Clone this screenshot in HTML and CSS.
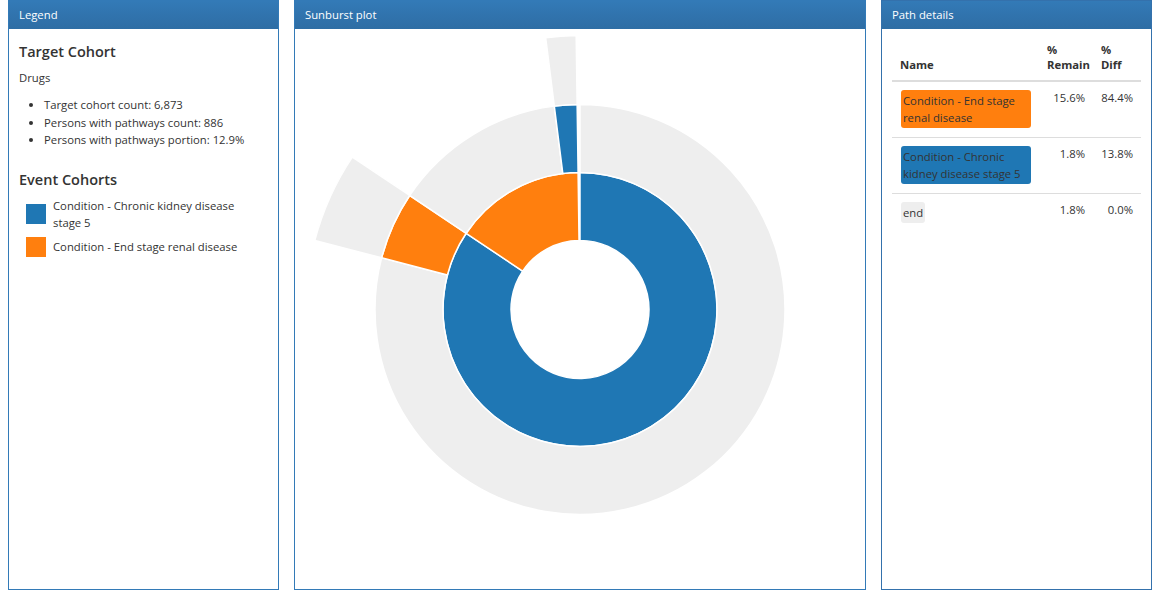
FILE: index.html
```html
<!DOCTYPE html>
<html>
	<head>
		<meta charset="UTF-8">
		<title>Pathways</title>
		<link rel="stylesheet" href="styles.css">
	</head>
	<body>
		<div class="page">
			<div class="panel">
				<div class="panel-heading">Legend</div>
				<div class="panel-body legend">
					<h4>Target Cohort</h4>
					<p>Drugs</p>
					<ul>
						<li>Target cohort count: 6,873</li>
						<li>Persons with pathways count: 886</li>
						<li>Persons with pathways portion: 12.9%</li>
					</ul>
					<h4 class="second">Event Cohorts</h4>
					<div class="legend-item">
						<span class="swatch blue"></span>
						<span class="label">Condition - Chronic kidney disease stage 5</span>
					</div>
					<div class="legend-item">
						<span class="swatch orange"></span>
						<span class="label">Condition - End stage renal disease</span>
					</div>
				</div>
			</div>
			<div class="panel">
				<div class="panel-heading">Sunburst plot</div>
				<div class="panel-body plot">
					<svg id="sunburst" width="570" height="559" viewBox="0 0 570 559"></svg>
				</div>
			</div>
			<div class="panel path">
				<div class="panel-heading">Path details</div>
				<div class="panel-body details">
					<table class="table">
						<colgroup>
							<col class="c-name">
							<col class="c-remain">
							<col class="c-diff">
						</colgroup>
						<thead>
							<tr>
								<th>Name</th>
								<th>%<br>Remain</th>
								<th>%<br>Diff</th>
							</tr>
						</thead>
						<tbody>
							<tr>
								<td><span class="tag orange">Condition - End stage renal disease</span></td>
								<td class="num">15.6%</td>
								<td class="num">84.4%</td>
							</tr>
							<tr>
								<td><span class="tag blue">Condition - Chronic kidney disease stage 5</span></td>
								<td class="num">1.8%</td>
								<td class="num">13.8%</td>
							</tr>
							<tr>
								<td><span class="tag end">end</span></td>
								<td class="num">1.8%</td>
								<td class="num">0.0%</td>
							</tr>
						</tbody>
					</table>
				</div>
			</div>
		</div>
		<script>
			var svg=document.getElementById('sunburst');
			var cx=285, cy=279.5;
			// inner radius, outer radius, start angle, end angle (degrees, clockwise from top), colour
			var segs=[
				[69,137,0,303.8,'#1f77b4'],
				[69,137,303.8,359.2,'#ff7f0e'],
				[137,205,0,284.6,'#eeeeee'],
				[137,205,284.6,303.8,'#ff7f0e'],
				[137,205,303.8,352.8,'#eeeeee'],
				[137,205,352.8,359.2,'#1f77b4'],
				[205,274,284.6,303.8,'#eeeeee'],
				[205,274,352.8,359.2,'#eeeeee']
			];
			function pt(r,a){
				a=a*Math.PI/180;
				return [(cx+r*Math.sin(a)).toFixed(2),(cy-r*Math.cos(a)).toFixed(2)];
			}
			function arc(r0,r1,a0,a1){
				var large=(a1-a0)>180?1:0;
				return 'M'+pt(r1,a0)+'A'+r1+','+r1+' 0 '+large+' 1 '+pt(r1,a1)+
					'L'+pt(r0,a1)+'A'+r0+','+r0+' 0 '+large+' 0 '+pt(r0,a0)+'Z';
			}
			for(var i=0;i<segs.length;i++){
				var s=segs[i];
				var p=document.createElementNS('http://www.w3.org/2000/svg','path');
				p.setAttribute('d',arc(s[0],s[1],s[2],s[3]));
				p.setAttribute('fill',s[4]);
				p.setAttribute('class','seg');
				svg.appendChild(p);
			}
		</script>
	</body>
</html>
```

FILE: styles.css
```css
*{
	box-sizing: border-box;
}
body{
	margin: 0;
	font-family: "Open Sans", "Noto Sans", sans-serif;
	font-size: 11.3px;
	line-height: 1.42857;
	color: #333;
	background-color: #fff;
}
.page{
	display: grid;
	grid-template-columns: 271px 572px 271px;
	column-gap: 15px;
	padding-left: 8px;
}
.panel{
	height: 590px;
	border: 1px solid #337ab7;
	display: flex;
	flex-direction: column;
}
.panel.path{
	border-color: #3471ac;
}
.panel-heading{
	height: 28px;
	line-height: 27px;
	padding: 0 10px;
	color: #fff;
	background-image: linear-gradient(to bottom, #337ab7 0, #2e6da4 100%);
	flex: none;
}
.panel-body{
	flex: 1;
	padding: 10px;
}
.legend h4{
	margin: 5px 0 10px;
	font-size: 14.5px;
	font-weight: 600;
	line-height: 1.1;
}
.legend h4.second{
	margin-top: 23px;
	margin-bottom: 9px;
}
.legend p{
	margin: 0 0 10px;
}
.legend ul{
	margin: 0;
	padding-left: 25px;
	line-height: 17.5px;
}
.legend-item{
	display: flex;
	align-items: center;
	margin-bottom: 6px;
	padding-left: 7px;
	line-height: 17px;
}
.legend-item .label{
	max-width: 205px;
}
.swatch{
	width: 20px;
	height: 20px;
	flex: none;
	margin-right: 7px;
}
.blue{
	background-color: #1f77b4;
}
.orange{
	background-color: #ff7f0e;
}
.plot{
	padding: 0;
	display: flex;
	align-items: center;
	justify-content: center;
}
.seg{
	stroke: #fff;
	stroke-width: 1.5;
}
.details{
	padding: 4px 10px;
}
.table{
	width: 249px;
	table-layout: fixed;
	border-collapse: collapse;
	border-spacing: 0;
}
.c-name{
	width: 147px;
}
.c-remain{
	width: 54px;
}
.c-diff{
	width: 48px;
}
.table th{
	text-align: left;
	vertical-align: bottom;
	font-weight: 700;
	line-height: 15px;
	padding: 9px 8px 8px;
	border-bottom: 2px solid #ddd;
}
.table td{
	vertical-align: top;
	padding: 8px 8px 9px;
	border-top: 1px solid #ddd;
	line-height: 17px;
}
.table tbody tr:first-child td{
	border-top: 0;
}
.table td.num{
	text-align: right;
	padding-top: 7px;
}
.tag{
	display: inline-block;
	padding: 2px 2px;
	border-radius: 3px;
	color: #333;
	line-height: 17px;
	vertical-align: top;
	margin-left: 1px;
}
.tag.end{
	background-color: #eee;
}
```
